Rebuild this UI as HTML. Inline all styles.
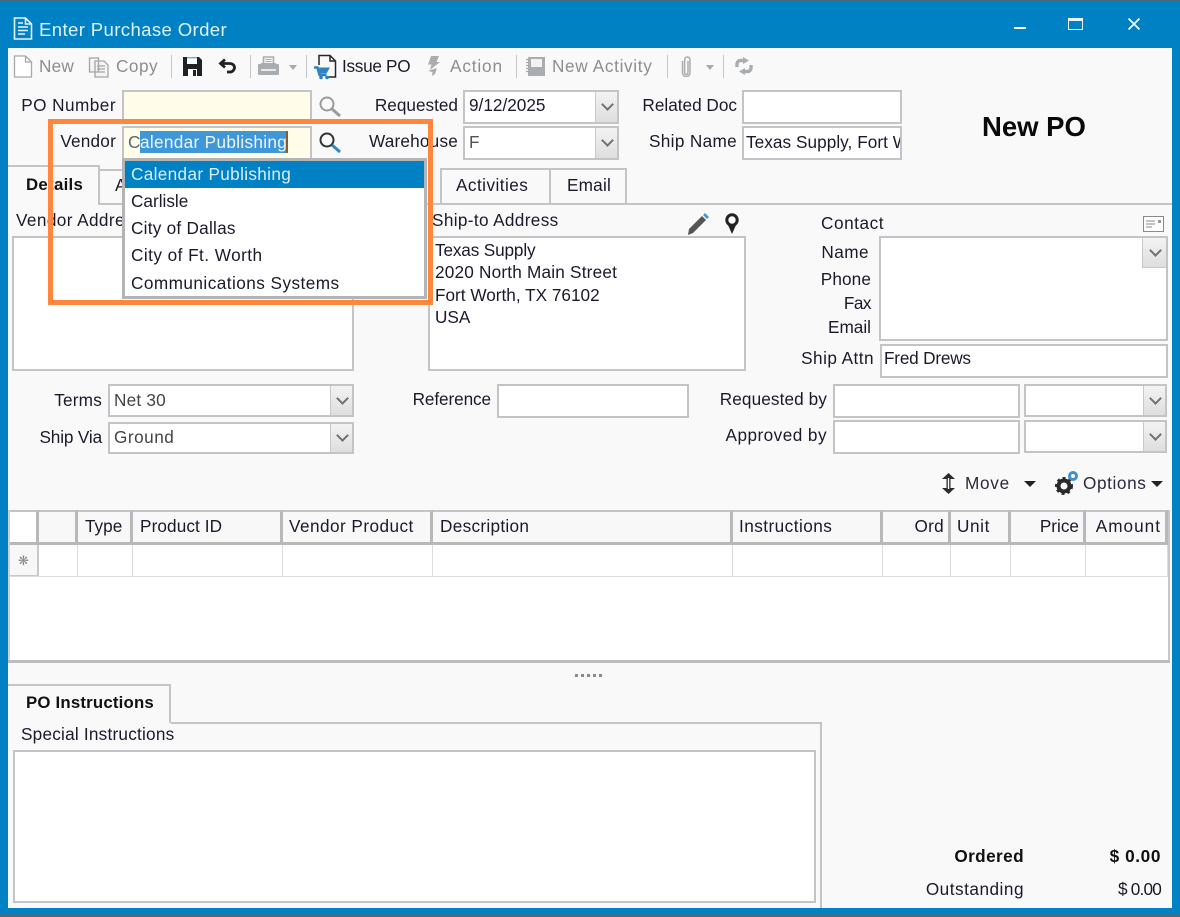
<!DOCTYPE html>
<html><head><meta charset="utf-8"><style>
html,body{margin:0;padding:0;background:#0081c3}
#p{position:relative;width:1180px;height:917px;overflow:hidden;background:#0081c3;font-family:"Liberation Sans",sans-serif;font-size:17.2px;color:#1a1a2a}
#p div,#p svg{position:absolute}
.t{white-space:nowrap;line-height:22px;height:22px}
.r{text-align:right}
.g{color:#8d8d8d}
.b{font-weight:bold;color:#111}
.i{background:#fff;border:2px solid #c2c4c5;box-sizing:border-box}
.dd{background:linear-gradient(#f3f3f3,#dedede);border-left:1px solid #c8c8c8;box-sizing:border-box}
.dd:after{content:"";position:absolute;left:50%;top:50%;width:7px;height:7px;margin:-7px 0 0 -4px;border-right:2px solid #6e7276;border-bottom:2px solid #6e7276;transform:rotate(45deg)}
.sep{width:1px;background:#c5c5c5;top:55px;height:23px}
.h{top:510px;height:35px;background:#f8f8f8;border-right:3px solid #b8b8b8;border-top:2px solid #c4c4c4;border-bottom:3px solid #b8b8b8;box-sizing:border-box}
.v{top:545px;height:32px;width:1px;background:#dcdcdc}
</style></head><body><div id="p">
<div style="left:0;top:0;width:1180px;height:2px;background:#4a6a80"></div>
<div style="left:0;top:914px;width:1180px;height:3px;background:#3c6f8f"></div>
<div style="left:8px;top:48px;width:1164px;height:860px;background:#faf9fa"></div>

<!-- title bar -->
<svg style="left:13px;top:17px" width="20" height="23" viewBox="0 0 20 23" fill="none" stroke="#e4f2fa" stroke-width="1.6"><path d="M1.500 1h11l6 6v15h-17zM12.500 1v6h6M5 6h5M5 10h10M5 13.500h10M5 17h7"/></svg>
<div class="t" style="left:39px;top:18px;color:#dff0fa;font-size:18.600px;height:24px;line-height:24px;letter-spacing:.36px">Enter Purchase Order</div>
<div style="left:1014px;top:27px;width:12px;height:2px;background:#fff"></div>
<div style="left:1068px;top:18px;width:15px;height:12px;border:1.500px solid #e8f4fb;border-top-width:3px;box-sizing:border-box"></div>
<svg style="left:1127px;top:17px" width="14" height="14" fill="none" stroke="#f2f9fd" stroke-width="1.700"><path d="M1.500 1.500l11 11M12.500 1.500l-11 11"/></svg>

<!-- toolbar -->
<svg style="left:13px;top:55px" width="20" height="23" fill="#fff" stroke="#a8a8a8" stroke-width="1.300"><path d="M1.500 1h11l6 6v15h-17zM12.500 1v6h6"/></svg>
<div class="t g" style="left:39px;top:55px;letter-spacing:.2px">New</div>
<svg style="left:88px;top:55px" width="22" height="23" fill="#f4f4f4" stroke="#a5a5a5" stroke-width="1.300"><path d="M1.500 3h9v14h-9zM7 6h9l4 4v12h-13zM9 11h8M9 14h8M9 17h8"/></svg>
<div class="t g" style="left:116px;top:55px;letter-spacing:.5px">Copy</div>
<div class="sep" style="left:171px"></div>
<svg style="left:183px;top:57px" width="19" height="19"><path fill="#1f2326" d="M0 0h16l3 3v16H0z"/><path fill="#fff" d="M4 1h10v6H4z"/><path fill="#6fb0de" d="M4 0h10v1.500H4z"/><path fill="#fff" d="M5 12h9v7H5z"/><path fill="#1f2326" d="M10 13h3v6h-3z"/></svg>
<svg style="left:218px;top:58px" width="18" height="16" fill="none" stroke="#1f2326" stroke-width="2.800"><path d="M7 1.500L2.500 5.500 7 9.500M3 5.500h9c2.500 0 4.500 1.700 4.500 4s-2 4.500-4.500 4.500H9"/></svg>
<div class="sep" style="left:250px"></div>
<svg style="left:258px;top:56px" width="21" height="19" fill="#a9adb0"><path fill="#f4f4f4" stroke="#a9adb0" stroke-width="1.600" d="M5.500 1h10v7h-10z"/><path stroke="#a9adb0" d="M7.500 3.500h6M7.500 5.500h6"/><path d="M1 8h2v-1h15v1h2c.6 0 1 .4 1 1v9c0 .6-.4 1-1 1H1c-.6 0-1-.4-1-1V9c0-.6.400-1 1-1z"/><path fill="#e8e8e8" d="M3 13h15v2H3z"/></svg>
<div style="left:289px;top:65px;border:4px solid transparent;border-top:5px solid #aaa"></div>
<div class="sep" style="left:306px"></div>
<svg style="left:313px;top:54px" width="25" height="26" fill="none"><path stroke="#23262a" stroke-width="1.500" d="M6 11V1.500h11l5.500 5.500v16H13M17 1.500V7h5.500"/><path stroke="#2e82c4" stroke-width="2.600" d="M1 13.500h3.500l2 7.500h7"/><path fill="#2e82c4" d="M6 13.500h11l-3.500 6H7z"/><circle cx="8" cy="23.500" r="1.800" fill="#2e82c4"/><circle cx="14" cy="23.500" r="1.800" fill="#2e82c4"/></svg>
<div class="t" style="left:342px;top:55px;letter-spacing:-.3px">Issue PO</div>
<svg style="left:427px;top:56px" width="13" height="20" fill="#a9adb0"><path d="M4 0h8l-2.500 6H13L3 14l1.500-5.500H1zM1 15l9-3-2 6-3 2 .5-4z"/></svg>
<div class="t g" style="left:450px;top:55px;letter-spacing:.85px">Action</div>
<div class="sep" style="left:516px"></div>
<svg style="left:526px;top:57px" width="20" height="19"><path fill="#a9adb0" d="M2 0h17v19H2z"/><path fill="#f2f2f2" d="M5 2h11v8H5z"/><path stroke="#a9adb0" stroke-width="1.300" d="M0 2.500h3M0 5.500h3M0 8.500h3M0 11.500h3M0 14.500h3"/></svg>
<div class="t g" style="left:552px;top:55px;letter-spacing:.65px">New Activity</div>
<div class="sep" style="left:667px"></div>
<svg style="left:680px;top:56px" width="13" height="21" fill="none" stroke="#a9adb0" stroke-width="1.500"><path d="M8 5v11c0 1.500-.6 2.500-1.700 2.500S4.600 17.500 4.600 16V4c0-1.800 1-3 2.600-3s2.800 1.200 2.800 3v12.500c0 2.500-1.500 4-3.700 4S2.500 19 2.500 16.500V5"/></svg>
<div style="left:706px;top:65px;border:4px solid transparent;border-top:5px solid #aaa"></div>
<div class="sep" style="left:723px"></div>
<svg style="left:735px;top:57px" width="18" height="18" fill="none" stroke="#a9adb0" stroke-width="3.400"><path d="M2 10V7c0-2 1.500-3.500 3.500-3.500H9M16 8v3c0 2-1.500 3.500-3.500 3.500H9"/><path fill="#a9adb0" stroke="none" d="M8 0l6 3.500L8 7zM10 11l-6 3.500 6 3.500z"/></svg>

<!-- top form -->
<div class="t r" style="right:1064px;top:94px;letter-spacing:.45px">PO Number</div>
<div class="i" style="left:122px;top:90px;width:190px;height:34px;background:#fffdea"></div>
<svg style="left:318px;top:95px" width="25" height="25" fill="none" stroke="#9b9b9b"><circle cx="9" cy="9" r="6.500" stroke-width="2"/><path d="M14 14l8 7" stroke-width="3"/></svg>
<div class="t r" style="right:722px;top:94px">Requested</div>
<div class="i" style="left:463px;top:90px;width:156px;height:34px"></div>
<div class="t" style="left:469px;top:94px">9/12/2025</div>
<div class="dd" style="left:595px;top:92px;width:22px;height:30px"></div>
<div class="t r" style="right:443px;top:94px">Related Doc</div>
<div class="i" style="left:742px;top:90px;width:160px;height:34px"></div>
<div class="t" style="left:982px;top:111px;font-size:27.500px;font-weight:bold;color:#0a0a0a;height:32px;line-height:32px">New PO</div>

<div class="t r" style="right:1064px;top:130px;letter-spacing:.2px">Vendor</div>
<div class="i" style="left:122px;top:126px;width:190px;height:34px;background:#fffdea"></div>
<div style="left:140px;top:131px;width:147px;height:22px;background:#3f97d8"></div>
<div style="left:286px;top:131px;width:2px;height:22px;background:#8a5a30"></div>
<div class="t" style="left:128px;top:131px;color:#5b6470">C</div>
<div class="t" style="left:140px;top:131px;color:#eaf5fc;letter-spacing:.32px">alendar Publishing</div>
<svg style="left:318px;top:131px" width="25" height="25" fill="none"><circle cx="9" cy="9" r="6.500" stroke="#333" stroke-width="2"/><path d="M14 14l8 7" stroke="#2f86c8" stroke-width="3"/></svg>
<div class="t r" style="right:722px;top:130px;letter-spacing:.2px">Warehouse</div>
<div class="i" style="left:463px;top:126px;width:156px;height:34px"></div>
<div class="t" style="left:469px;top:131px;color:#555">F</div>
<div class="dd" style="left:595px;top:128px;width:22px;height:30px"></div>
<div class="t r" style="right:443px;top:130px;letter-spacing:.33px">Ship Name</div>
<div class="i" style="left:742px;top:126px;width:160px;height:34px;overflow:hidden"><div class="t" style="left:2px;top:3px;letter-spacing:.05px">Texas Supply, Fort W</div></div>

<!-- tabs -->
<div style="left:8px;top:203px;width:1164px;height:2px;background:#c4c4c4"></div>
<div style="left:8px;top:165px;width:92px;height:40px;background:#faf9fa;border-top:2px solid #c4c4c4;border-right:2px solid #c4c4c4;box-sizing:border-box"></div>
<div class="t b" style="left:26px;top:174px;font-size:16.800px;letter-spacing:.3px">Details</div>
<div style="left:100px;top:169px;width:24px;height:34px;border-top:2px solid #c4c4c4;box-sizing:border-box"></div>
<div class="t" style="left:115px;top:174px">A</div>
<div style="left:440px;top:168px;width:111px;height:36px;border:2px solid #c4c4c4;border-bottom:0;box-sizing:border-box"></div>
<div style="left:551px;top:168px;width:76px;height:36px;border:2px solid #c4c4c4;border-bottom:0;border-left:0;box-sizing:border-box"></div>
<div class="t" style="left:456px;top:174px;letter-spacing:.45px">Activities</div>
<div class="t" style="left:567px;top:174px;letter-spacing:.2px">Email</div>

<!-- address -->
<div class="t" style="left:16px;top:209px;letter-spacing:.4px">Vendor Address</div>
<div class="i" style="left:12px;top:236px;width:342px;height:135px"></div>
<div class="t" style="left:432px;top:209px;letter-spacing:.35px">Ship-to Address</div>
<svg style="left:687px;top:212px" width="24" height="24"><path fill="#555" d="M2 17L15 4l4 4L6 21l-5 2z"/><path fill="#4a93d2" d="M16 3l2-2 4 4-2 2z"/></svg>
<svg style="left:724px;top:213px" width="16" height="21" fill="none"><circle cx="8" cy="7" r="5.200" stroke="#222" stroke-width="3"/><path fill="#222" d="M4 12h8l-4 9z"/></svg>
<div class="i" style="left:428px;top:236px;width:318px;height:135px"></div>
<div class="t" style="left:435px;top:239px;letter-spacing:-.15px">Texas Supply</div>
<div class="t" style="left:435px;top:261px;letter-spacing:.2px">2020 North Main Street</div>
<div class="t" style="left:435px;top:284px">Fort Worth, TX 76102</div>
<div class="t" style="left:435px;top:306px">USA</div>

<!-- contact -->
<div class="t" style="left:821px;top:212px;letter-spacing:.55px">Contact</div>
<svg style="left:1143px;top:216px" width="21" height="16" fill="#fff" stroke="#8a8a8a"><path d="M.5.500h20v15H.500zM3 5h9M3 8h9M3 11h6"/><path fill="#999" stroke="none" d="M15 4h3v3h-3z"/></svg>
<div class="t r" style="right:311px;top:241px;letter-spacing:.45px">Name</div>
<div class="t r" style="right:309px;top:268px;letter-spacing:.1px">Phone</div>
<div class="t r" style="right:309px;top:292px;letter-spacing:-.5px">Fax</div>
<div class="t r" style="right:309px;top:316px">Email</div>
<div class="i" style="left:879px;top:236px;width:289px;height:105px"></div>
<div class="dd" style="left:1142px;top:238px;width:24px;height:30px;border-bottom:1px solid #c8c8c8"></div>
<div class="t r" style="right:306px;top:347px;letter-spacing:.45px">Ship Attn</div>
<div class="i" style="left:880px;top:344px;width:288px;height:34px"></div>
<div class="t" style="left:884px;top:347px;letter-spacing:-.2px">Fred Drews</div>

<!-- terms -->
<div class="t r" style="right:1078px;top:389px;letter-spacing:.2px">Terms</div>
<div class="i" style="left:108px;top:384px;width:246px;height:33px"></div>
<div class="t" style="left:114px;top:389px;color:#444;letter-spacing:.2px">Net 30</div>
<div class="dd" style="left:330px;top:386px;width:22px;height:29px"></div>
<div class="t r" style="right:1078px;top:426px;letter-spacing:-.15px">Ship Via</div>
<div class="i" style="left:108px;top:422px;width:246px;height:32px"></div>
<div class="t" style="left:114px;top:426px;color:#444;letter-spacing:.5px">Ground</div>
<div class="dd" style="left:330px;top:424px;width:22px;height:28px"></div>

<div class="t r" style="right:689px;top:388px;letter-spacing:-.1px">Reference</div>
<div class="i" style="left:497px;top:384px;width:192px;height:34px"></div>

<div class="t r" style="right:353px;top:388px;letter-spacing:.1px">Requested by</div>
<div class="i" style="left:833px;top:384px;width:187px;height:34px"></div>
<div class="i" style="left:1024px;top:384px;width:143px;height:33px"></div>
<div class="dd" style="left:1143px;top:386px;width:22px;height:29px"></div>
<div class="t r" style="right:353px;top:424px;letter-spacing:.45px">Approved by</div>
<div class="i" style="left:833px;top:420px;width:187px;height:34px"></div>
<div class="i" style="left:1024px;top:420px;width:143px;height:33px"></div>
<div class="dd" style="left:1143px;top:422px;width:22px;height:29px"></div>

<!-- move / options -->
<svg style="left:941px;top:473px" width="15" height="21" fill="#2a2a2a"><path d="M7.500 0L14 6H9.500v9H14l-6.500 6L1 15h4.500V6H1z"/><path fill="#fff" d="M6.800 5h1.400v11H6.800z"/></svg>
<div class="t" style="left:965px;top:472px;color:#2a2a3e;letter-spacing:.7px">Move</div>
<div style="left:1024px;top:481px;border:5px solid transparent;border-top:6px solid #222;border-left-width:6px;border-right-width:6px"></div>
<svg style="left:1055px;top:470px" width="25" height="26"><circle cx="9" cy="16" r="5.500" fill="none" stroke="#2a2a2a" stroke-width="4"/><circle cx="9" cy="16" r="8" fill="none" stroke="#2a2a2a" stroke-width="2" stroke-dasharray="3 3"/><circle cx="18" cy="6" r="3.500" fill="none" stroke="#3b8fd2" stroke-width="3"/></svg>
<div class="t" style="left:1083px;top:472px;color:#2a2a3e;letter-spacing:.6px">Options</div>
<div style="left:1151px;top:481px;border:5px solid transparent;border-top:6px solid #222;border-left-width:6px;border-right-width:6px"></div>

<!-- grid -->
<div style="left:10px;top:510px;width:1158px;height:151px;background:#fff"></div>
<div class="h" style="left:10px;width:29px;background:#fff"></div>
<div class="h" style="left:39px;width:39px"></div>
<div class="h" style="left:78px;width:55px"></div>
<div class="h" style="left:133px;width:150px"></div>
<div class="h" style="left:283px;width:150px"></div>
<div class="h" style="left:433px;width:300px"></div>
<div class="h" style="left:733px;width:150px"></div>
<div class="h" style="left:883px;width:68px"></div>
<div class="h" style="left:951px;width:60px"></div>
<div class="h" style="left:1011px;width:75px"></div>
<div class="h" style="left:1086px;width:82px"></div>
<div class="t" style="left:85px;top:515px">Type</div>
<div class="t" style="left:140px;top:515px;letter-spacing:.1px">Product ID</div>
<div class="t" style="left:289px;top:515px;letter-spacing:.45px">Vendor Product</div>
<div class="t" style="left:440px;top:515px;letter-spacing:.3px">Description</div>
<div class="t" style="left:739px;top:515px;letter-spacing:.45px">Instructions</div>
<div class="t r" style="right:236px;top:515px;letter-spacing:.3px">Ord</div>
<div class="t" style="left:957px;top:515px;letter-spacing:.6px">Unit</div>
<div class="t r" style="right:101px;top:515px">Price</div>
<div class="t r" style="right:19px;top:515px;letter-spacing:1px">Amount</div>
<div style="left:10px;top:545px;width:29px;height:32px;background:#f7f7f7;border-right:2px solid #c8c8c8;border-bottom:2px solid #c8c8c8;box-sizing:border-box"></div>
<div class="t" style="left:18px;top:550px;font-size:13px;color:#888">&#10059;</div>
<div class="v" style="left:77px"></div><div class="v" style="left:132px"></div><div class="v" style="left:282px"></div><div class="v" style="left:432px"></div><div class="v" style="left:732px"></div><div class="v" style="left:882px"></div><div class="v" style="left:950px"></div><div class="v" style="left:1010px"></div><div class="v" style="left:1085px"></div><div class="v" style="left:1167px"></div>
<div style="left:10px;top:576px;width:1158px;height:1px;background:#dcdcdc"></div>
<div style="left:8px;top:510px;width:2px;height:152px;background:#cfcfcf"></div>
<div style="left:1168px;top:510px;width:2px;height:152px;background:#c8c8c8"></div>
<div style="left:8px;top:660px;width:1162px;height:3px;background:#bdbdbd"></div>
<div style="left:575px;top:674px;width:29px;height:3px;background:repeating-linear-gradient(90deg,#8a8a8a 0 3px,transparent 3px 6px)"></div>

<!-- instructions -->
<div style="left:8px;top:684px;width:163px;height:39px;background:#faf9fa;border-top:2px solid #c4c4c4;border-right:2px solid #c4c4c4;box-sizing:border-box"></div>
<div style="left:171px;top:722px;width:651px;height:2px;background:#c4c4c4"></div>
<div style="left:820px;top:722px;width:2px;height:186px;background:#c4c4c4"></div>
<div class="t b" style="left:26px;top:692px;font-size:16.800px;letter-spacing:.2px">PO Instructions</div>
<div class="t" style="left:21px;top:723px;letter-spacing:.22px">Special Instructions</div>
<div class="i" style="left:13px;top:750px;width:803px;height:153px"></div>

<!-- totals -->
<div class="t b r" style="right:156px;top:845px;letter-spacing:.4px">Ordered</div>
<div class="t b r" style="right:19px;top:845px;letter-spacing:.6px">$ 0.00</div>
<div class="t r" style="right:156px;top:878px;letter-spacing:.5px">Outstanding</div>
<div class="t r" style="right:19px;top:878px;letter-spacing:-.8px">$ 0.00</div>

<!-- dropdown -->
<div style="left:122px;top:158px;width:305px;height:141px;background:#fff;border:3px solid #b2b4b5;box-sizing:border-box"></div>
<div style="left:125px;top:161px;width:299px;height:27px;background:#0081c3"></div>
<div class="t" style="left:131px;top:163px;color:#d8eefa;letter-spacing:.33px">Calendar Publishing</div>
<div class="t" style="left:131px;top:190px">Carlisle</div>
<div class="t" style="left:131px;top:217px;letter-spacing:.25px">City of Dallas</div>
<div class="t" style="left:131px;top:244px;letter-spacing:.45px">City of Ft. Worth</div>
<div class="t" style="left:131px;top:272px;letter-spacing:.45px">Communications Systems</div>

<!-- orange highlight -->
<div style="left:48px;top:119px;width:385px;height:186px;border:5px solid #ff873d;box-sizing:border-box"></div>
</div></body></html>
